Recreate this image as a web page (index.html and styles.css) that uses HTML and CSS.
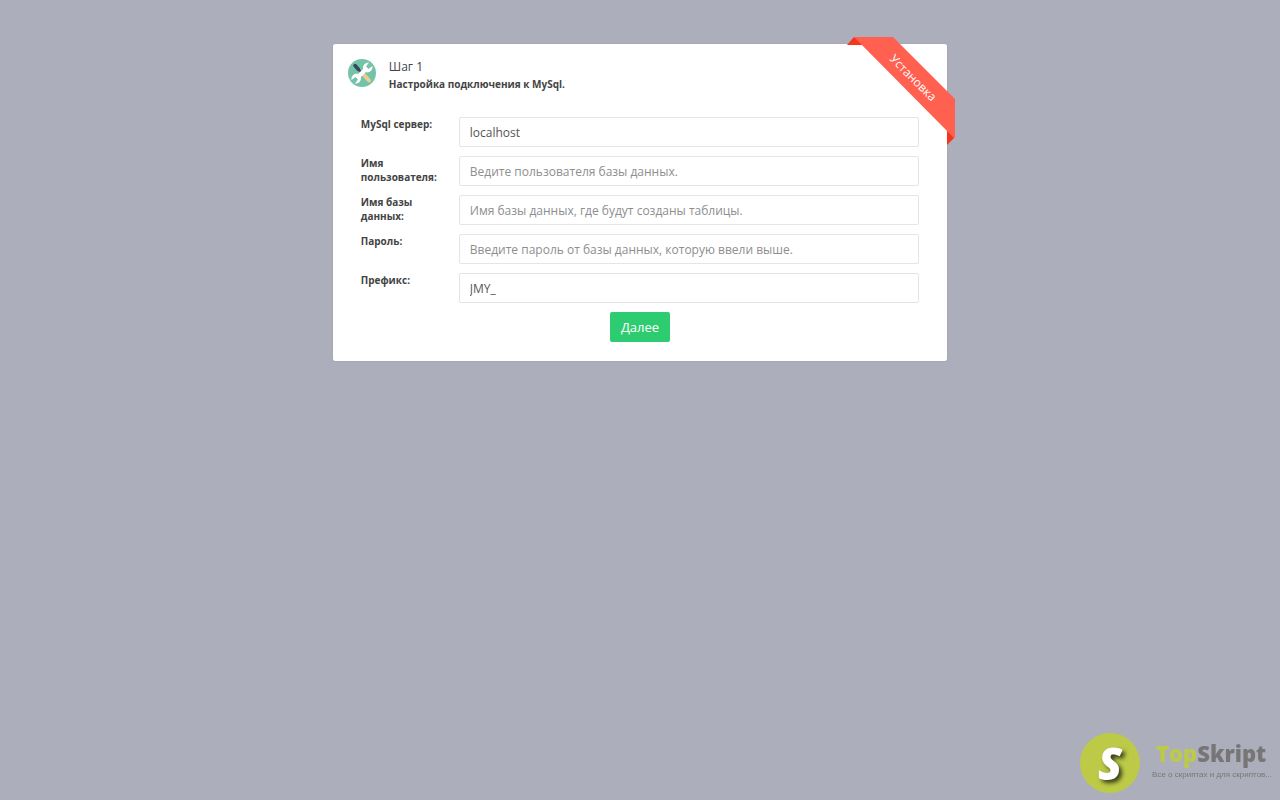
FILE: index.html
```html
<!DOCTYPE html>
<html lang="ru">

<head>
  <meta charset="utf-8">
  <title>Установка - Шаг 1</title>
  <link rel="stylesheet" href="styles.css">
</head>

<body>
  <main class="panel">
    <div class="ribbon">
      <svg class="ribbon-shape" viewBox="0 0 108 108" aria-hidden="true">
        <path fill="#f5351c" d="M0 8 7 0 20 8zM100 88 107 101 100 108z" />
        <path fill="#ff604f" d="M7 0H46L108 62V101H107z" />
      </svg>
      <span class="ribbon-text">Установка</span>
    </div>

    <header class="panel-header">
      <svg class="step-icon" viewBox="0 0 60 60" aria-hidden="true">
        <circle cx="30" cy="30" r="28" fill="#74c3a8" />
        <!-- screwdriver -->
        <path d="M16 15 23 23" stroke="#324a5e" stroke-width="7" stroke-linecap="round" />
        <path d="M20 20 30 30" stroke="#324a5e" stroke-width="4" />
        <path d="M33 33 44 45" stroke="#f0cd8d" stroke-width="8" stroke-linecap="round" />
        <!-- wrench -->
        <path d="M20 40 40 20" stroke="#fff" stroke-width="8" />
        <path d="M51 16 43 22 38 17 44 9A11 11 0 0 0 32 21 11 11 0 0 0 40 29 11 11 0 0 0 51 16z" fill="#fff" />
        <path d="M9 44 17 38 22 43 16 51A11 11 0 0 0 28 39 11 11 0 0 0 20 31 11 11 0 0 0 9 44z" fill="#fff" />
      </svg>
      <div>
        <div class="step-title">Шаг 1</div>
        <h1 class="step-text">Настройка подключения к MySql.</h1>
      </div>
    </header>

    <form class="form">
      <div class="row">
        <label for="host">MySql сервер:</label>
        <input type="text" id="host" value="localhost">
      </div>
      <div class="row">
        <label for="user">Имя пользователя:</label>
        <input type="text" id="user" placeholder="Ведите пользователя базы данных.">
      </div>
      <div class="row">
        <label for="base">Имя базы данных:</label>
        <input type="text" id="base" placeholder="Имя базы данных, где будут созданы таблицы.">
      </div>
      <div class="row">
        <label for="pass">Пароль:</label>
        <input type="password" id="pass" placeholder="Введите пароль от базы данных, которую ввели выше.">
      </div>
      <div class="row">
        <label for="prefix">Префикс:</label>
        <input type="text" id="prefix" value="JMY_">
      </div>
      <button type="submit" class="btn">Далее</button>
    </form>
  </main>

  <div class="brand">
    <span class="brand-logo">S</span>
    <div class="brand-info">
      <div class="brand-name"><span>Top</span>Skript</div>
      <div class="brand-text">Все о скриптах и для скриптов...</div>
    </div>
  </div>
</body>

</html>
```

FILE: styles.css
```css
* {
  box-sizing: border-box;
}

body {
  margin: 0;
  padding: 44px 0;
  background: #acaebb;
  color: #444;
  font-family: "Open Sans", sans-serif;
  font-size: 13px;
}

.panel {
  position: relative;
  width: 48%;
  margin: 0 auto;
  padding: 14px 14px 19px;
  background: #fff;
  border-radius: 2px;
  box-shadow: 0 0 1px rgba(0, 0, 0, 0.25);
}

/* corner ribbon */
.ribbon {
  position: absolute;
  top: -7px;
  right: -8px;
  width: 108px;
  height: 108px;
}

.ribbon-shape {
  display: block;
  width: 100%;
  height: 100%;
}

.ribbon-text {
  position: absolute;
  top: 32px;
  left: 26px;
  width: 80px;
  line-height: 18px;
  color: #fff;
  font-size: 12px;
  text-align: center;
  transform: rotate(45deg);
}

/* header */
.panel-header {
  display: flex;
  gap: 12px;
  margin-bottom: 25px;
}

.step-icon {
  width: 30px;
  height: 30px;
}

.step-title {
  line-height: 18px;
  font-size: 12px;
}

.step-text {
  margin: 0;
  line-height: 16px;
  font-size: 10px;
  font-weight: bold;
}

/* form */
.form {
  display: flex;
  flex-direction: column;
  gap: 9px;
  padding: 0 14px;
}

.row {
  display: grid;
  grid-template-columns: 80px 1fr;
  gap: 18px;
}

.row label {
  line-height: 14px;
  font-size: 10px;
  font-weight: bold;
}

.row input {
  width: 100%;
  height: 30px;
  padding: 0 10px;
  border: 1px solid #e5e5e5;
  border-radius: 2px;
  background: #fff;
  color: #555;
  font-family: inherit;
  font-size: 12px;
}

.row input::placeholder {
  color: #8e8e8e;
}

.btn {
  align-self: center;
  height: 30px;
  padding: 0 11px;
  border: 0;
  border-radius: 2px;
  background: #2ecc71;
  color: #fff;
  font-family: inherit;
  font-size: 13px;
}

/* site badge in the corner */
.brand {
  position: fixed;
  right: 8px;
  bottom: 7px;
  display: flex;
  align-items: center;
  gap: 12px;
}

.brand-logo {
  width: 60px;
  height: 60px;
  border-radius: 50%;
  background: #bcca48;
  color: #fff;
  line-height: 60px;
  font-size: 44px;
  font-style: italic;
  font-weight: 800;
  text-align: center;
  text-shadow: 3px 3px 4px rgba(0, 0, 0, 0.7);
}

.brand-name {
  padding-left: 4px;
  color: #767676;
  line-height: 24px;
  font-size: 22px;
  font-weight: 800;
}

.brand-name span {
  color: #bcca48;
}

.brand-text {
  color: #777;
  line-height: 20px;
  font-family: "Liberation Sans", sans-serif;
  font-size: 8px;
}
```
